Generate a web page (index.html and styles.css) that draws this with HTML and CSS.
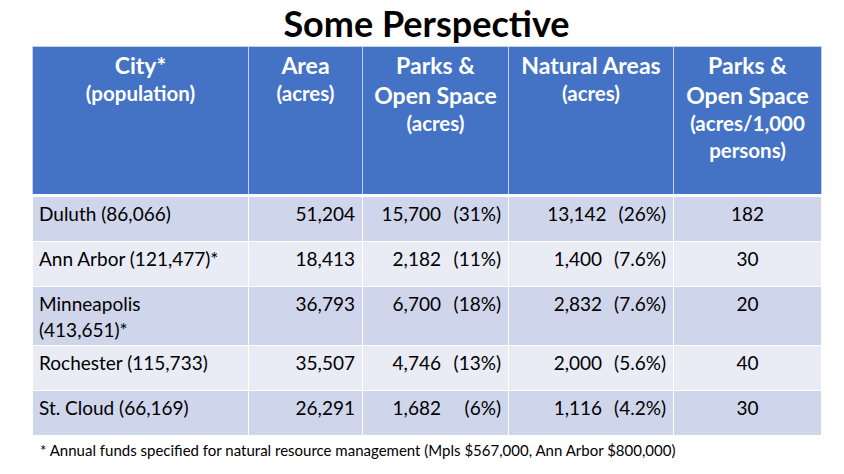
FILE: index.html
```html
<!DOCTYPE html>
<html lang="en">
<head>
<meta charset="utf-8">
<title>Some Perspective</title>
<link rel="stylesheet" href="styles.css">
</head>
<body>
<div class="slide">
  <h1 class="title">Some Perspective</h1>
  <table class="data">
    <colgroup>
      <col class="c-city">
      <col class="c-area">
      <col class="c-parks">
      <col class="c-nat">
      <col class="c-per">
    </colgroup>
    <thead>
      <tr>
        <th><span class="big">City*</span><span class="small">(population)</span></th>
        <th><span class="big">Area</span><span class="small">(acres)</span></th>
        <th><span class="big">Parks &amp;</span><span class="big">Open Space</span><span class="small">(acres)</span></th>
        <th><span class="big">Natural Areas</span><span class="small">(acres)</span></th>
        <th><span class="big">Parks &amp;</span><span class="big">Open Space</span><span class="small">(acres/1,000</span><span class="small">persons)</span></th>
      </tr>
    </thead>
    <tbody>
      <tr class="odd">
        <td class="city">Duluth (86,066)</td>
        <td class="num">51,204</td>
        <td class="num"><span>15,700</span><span class="pct">(31%)</span></td>
        <td class="num"><span>13,142</span><span class="pct2">(26%)</span></td>
        <td class="ctr">182</td>
      </tr>
      <tr class="even">
        <td class="city">Ann Arbor (121,477)*</td>
        <td class="num">18,413</td>
        <td class="num"><span>2,182</span><span class="pct">(11%)</span></td>
        <td class="num"><span>1,400</span><span class="pct2">(7.6%)</span></td>
        <td class="ctr">30</td>
      </tr>
      <tr class="odd tall">
        <td class="city">Minneapolis<br>(413,651)*</td>
        <td class="num">36,793</td>
        <td class="num"><span>6,700</span><span class="pct">(18%)</span></td>
        <td class="num"><span>2,832</span><span class="pct2">(7.6%)</span></td>
        <td class="ctr">20</td>
      </tr>
      <tr class="even">
        <td class="city">Rochester (115,733)</td>
        <td class="num">35,507</td>
        <td class="num"><span>4,746</span><span class="pct">(13%)</span></td>
        <td class="num"><span>2,000</span><span class="pct2">(5.6%)</span></td>
        <td class="ctr">40</td>
      </tr>
      <tr class="odd">
        <td class="city">St. Cloud (66,169)</td>
        <td class="num">26,291</td>
        <td class="num"><span>1,682</span><span class="pct">(6%)</span></td>
        <td class="num"><span>1,116</span><span class="pct2">(4.2%)</span></td>
        <td class="ctr">30</td>
      </tr>
    </tbody>
  </table>
  <p class="note">* Annual funds specified for natural resource management (Mpls $567,000, Ann Arbor $800,000)</p>
</div>
</body>
</html>
```
FILE: styles.css
```css
html, body {
  margin: 0;
  padding: 0;
  background: #ffffff;
}

body {
  font-family: "Lato", "Liberation Sans", sans-serif;
  color: #000000;
}

.slide {
  width: 789px;
  margin-left: 32px;
}

.title {
  margin: 0;
  height: 46px;
  font-size: 36px;
  line-height: 46px;
  font-weight: 700;
  text-align: center;
}

.data {
  width: 789px;
  border-collapse: collapse;
  table-layout: fixed;
}

.c-city { width: 216px; }
.c-area { width: 114px; }
.c-parks { width: 146px; }
.c-nat { width: 165px; }
.c-per { width: 148px; }

.data th {
  background: #4472c4;
  color: #ffffff;
  font-weight: 700;
  text-align: center;
  vertical-align: top;
  border: 1px solid #c5d2ec;
  border-bottom: 3px solid #ffffff;
  padding: 3px 2px 0;
  height: 149px;
  box-sizing: border-box;
}

.big {
  display: block;
  font-size: 23px;
  line-height: 30px;
}

.small {
  display: block;
  font-size: 20.5px;
  line-height: 27px;
}

.data td {
  border: 1px solid #ffffff;
  font-size: 19px;
  line-height: 26px;
  padding: 4px 7px 2px;
  height: 38px;
  vertical-align: top;
}

.odd td { background: #cfd5ea; }
.even td { background: #e9ebf5; }

.data td.city { text-align: left; padding-left: 6px; }
.num { text-align: right; padding-right: 5px; }
.data td.num:nth-child(2) { padding-right: 7px; }
.ctr { text-align: center; }

.pct {
  display: inline-block;
  width: 48px;
  margin-left: 12px;
  text-align: right;
}

.pct2 {
  margin-left: 12px;
}

.note {
  margin: 4px 0 0 8px;
  font-size: 15px;
  line-height: 20px;
}
```
